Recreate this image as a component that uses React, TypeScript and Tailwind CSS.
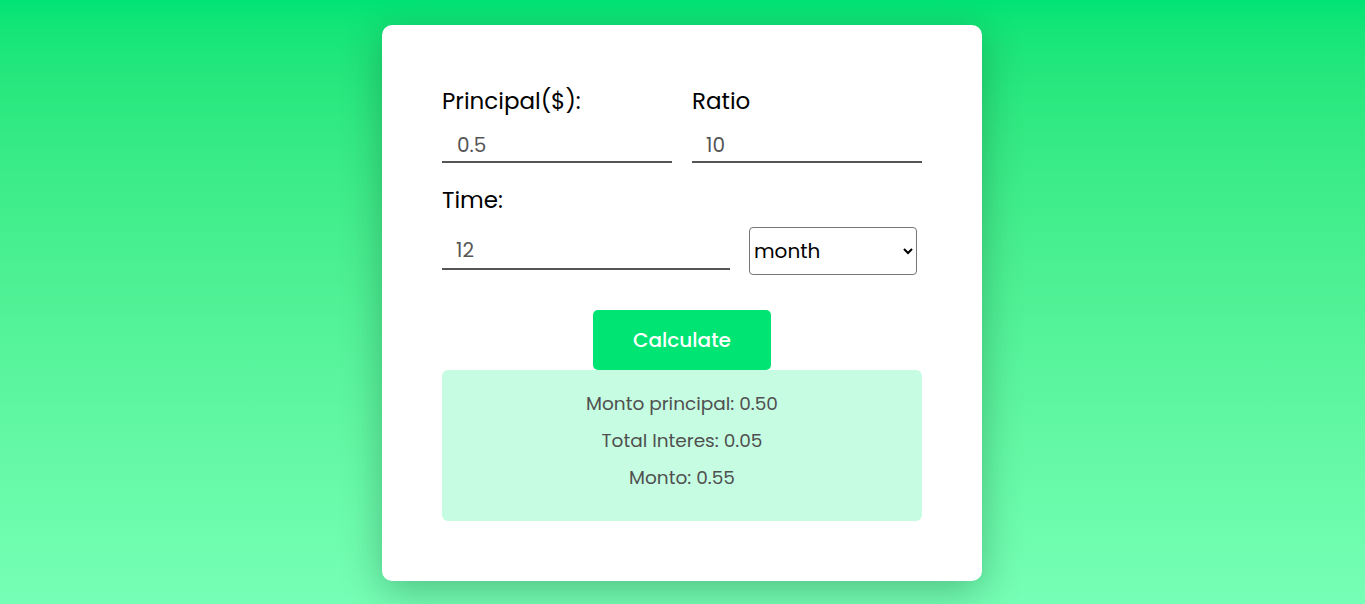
import React from "react";

export default function App() {
  return (
    <div className="min-h-[604px] w-full bg-gradient-to-b from-[#00e474] to-[#76ffb6] flex justify-center pr-[1px] pt-[25px] font-['Poppins','Open_Sans',sans-serif]">
      <div className="w-[600px] h-[556px] bg-white rounded-[10px] shadow-[0_10px_40px_rgba(0,50,20,0.3)] px-[60px] pt-[61px]">
        <div className="flex gap-[20px]">
          <div className="w-[230px]">
            <label className="block text-[23px] leading-[30px] text-black">Principal($):</label>
            <input
              defaultValue="0.5"
              className="mt-[7px] w-full h-[40px] border-b-2 border-[#555] pl-[15px] pt-[5px] text-[20px] text-[#555] outline-none"
            />
          </div>
          <div className="w-[230px]">
            <label className="block text-[23px] leading-[30px] text-black">Ratio</label>
            <input
              defaultValue="10"
              className="mt-[7px] w-full h-[40px] border-b-2 border-[#555] pl-[14px] pt-[5px] text-[20px] text-[#555] outline-none"
            />
          </div>
        </div>
        <label className="block mt-[22px] text-[23px] leading-[30px] text-black">Time:</label>
        <div className="mt-[12px] flex items-center gap-[19px]">
          <input
            defaultValue="12"
            className="w-[288px] h-[40px] mb-[2px] border-b-2 border-[#555] pl-[14px] pt-[2px] text-[20px] text-[#555] outline-none"
          />
          <select
            defaultValue="month"
            className="w-[168px] h-[48px] border border-[#767676] rounded-[4px] text-[20px] text-black px-0 outline-none"
          >
            <option value="month">month</option>
            <option value="year">year</option>
          </select>
        </div>
        <div className="flex justify-center mt-[35px]">
          <button className="w-[178px] h-[60px] bg-[#00e474] rounded-[5px] text-white text-[20px] font-medium">
            Calculate
          </button>
        </div>
        <div className="h-[151px] bg-[#c6fde2] rounded-[6px] flex flex-col items-center pt-[20px] gap-[9px] text-[18.5px] leading-[28px] text-[#505050]">
          <p>Monto principal: 0.50</p>
          <p>Total Interes: 0.05</p>
          <p>Monto: 0.55</p>
        </div>
      </div>
    </div>
  );
}
